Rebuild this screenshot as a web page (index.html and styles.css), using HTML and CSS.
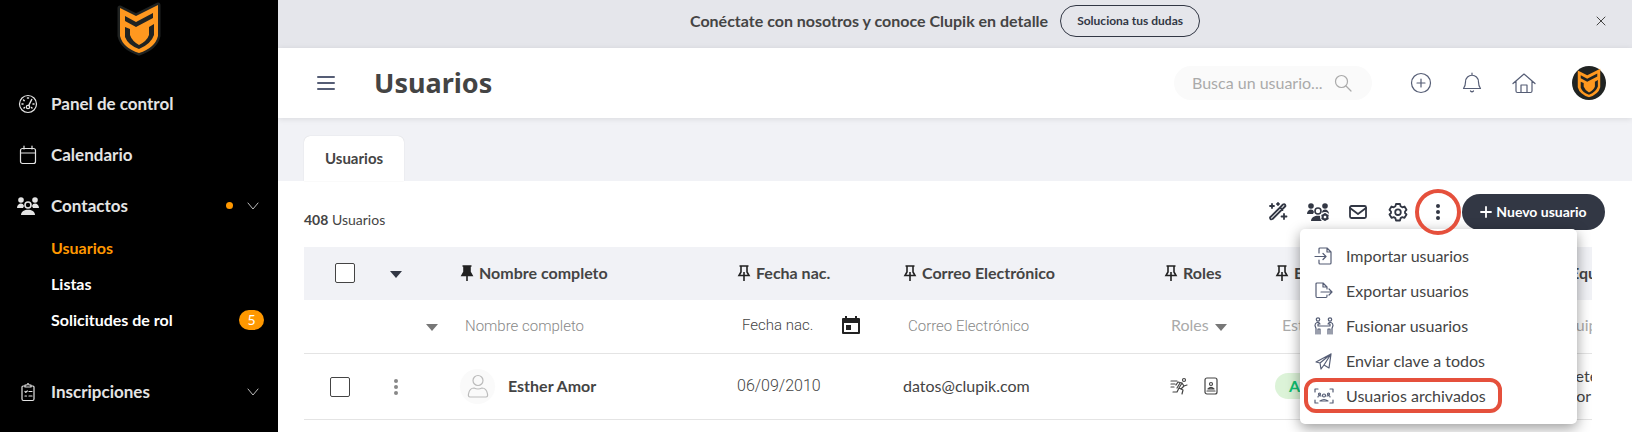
FILE: index.html
```
<!DOCTYPE html>
<html lang="es">
<head>
  <meta charset="UTF-8">
  <title>Usuarios</title>
  <meta name="viewport" content="width=device-width, initial-scale=1.0">
  <link rel="stylesheet" href="styles.css">
</head>
<body>

  <!-- shared icons -->
  <svg class="sprite" aria-hidden="true">
    <symbol id="shield" viewBox="0 0 44 54">
      <path d="M3 6 19 14 41 3V34Q38 46 22 51 6 46 3 34Z" fill="#ff981f"/>
      <path d="M8 14 19 20 36 11V16L19 25 8 19ZM8 25l5 2v6q2 6 9 10 8-4 10-10v-8l5-3v11q-3 9-15 14Q11 43 8 35Z" fill="#202322"/>
    </symbol>
    <symbol id="pin" viewBox="0 0 14 18">
      <path d="M2.500 2h9M4 2v6L2 11.500h10L10 8V2M7 8v9"/>
    </symbol>
    <symbol id="group" viewBox="0 0 24 20">
      <circle cx="5" cy="4" r="2.800"/><circle cx="19" cy="4" r="2.800"/>
      <path d="M1 12c0-5 6-6 7-2l-1 2zM23 12c0-5-6-6-7-2l1 2z"/>
      <circle cx="12" cy="9" r="3" fill="none" stroke="currentColor" stroke-width="1.600"/>
      <path d="M5 19c0-7 14-7 14 0z"/>
    </symbol>
    <symbol id="chevron" viewBox="0 0 14 10"><path d="m2 2 5 6 5-6"/></symbol>
  </svg>

  <div class="app">
    <aside class="sidebar">
      <a href="#" class="logo" aria-label="Clupik"><svg width="44" height="54" viewBox="0 0 44 54"><path d="M3 6 19 14 41 3V34Q38 46 22 51 6 46 3 34Z" fill="none" stroke="#202322" stroke-width="5" stroke-linejoin="round"/><use href="#shield"/></svg></a>

      <nav class="menu">
        <a href="#" class="menu-item">
          <svg class="line" width="20" height="20" viewBox="0 0 20 20"><circle cx="10" cy="10" r="8.500"/><circle cx="10" cy="13" r="1.700"/><path d="m10.700 11.500 3-6M4 10h1M15 10h1M5.500 6l.7.6M9.500 4h1M6 14l.5-.5M14 14l-.5-.5" stroke-width="1.500"/></svg>
          <span>Panel de control</span>
        </a>
        <a href="#" class="menu-item">
          <svg class="line" width="20" height="20" viewBox="0 0 20 20"><rect x="2.500" y="3.500" width="15" height="15" rx="2"/><path d="M2.500 8h15M6 1v3M14 1v3"/></svg>
          <span>Calendario</span>
        </a>
        <a href="#" class="menu-item">
          <svg class="solid" width="24" height="20"><use href="#group"/></svg>
          <span>Contactos</span>
          <i class="dot"></i>
          <svg class="line chevron" width="14" height="10"><use href="#chevron"/></svg>
        </a>
        <div class="submenu">
          <a href="#" class="active">Usuarios</a>
          <a href="#">Listas</a>
          <a href="#">Solicitudes de rol <span class="count">5</span></a>
        </div>
        <a href="#" class="menu-item">
          <svg class="line" width="20" height="20" viewBox="0 0 20 20"><path d="M6 4H5Q4 4 4 5v12q0 1.500 1.500 1.500h9Q16 18.500 16 17V5q0-1-1-1h-1M7 5V3h2q1-3 2 0h2v2zM7 9.500l.8.8L9.300 9M11 9.500h3M7 14h1.500M11 14h3"/></svg>
          <span>Inscripciones</span>
          <svg class="line chevron" width="14" height="10"><use href="#chevron"/></svg>
        </a>
      </nav>
    </aside>

    <main class="main">
      <div class="banner">
        <strong>Conéctate con nosotros y conoce Clupik en detalle</strong>
        <button class="banner-btn">Soluciona tus dudas</button>
        <button class="close" aria-label="Cerrar"><svg class="line" width="12" height="12"><path d="m2 2 8 8M10 2 2 10"/></svg></button>
      </div>

      <header class="header">
        <button class="burger" aria-label="Menú"><svg class="line" width="20" height="18"><path d="M2 3h16M2 9h16M2 15h16" stroke-width="2"/></svg></button>
        <h1>Usuarios</h1>
        <label class="search">
          <input type="text" placeholder="Busca un usuario..." aria-label="Busca un usuario">
          <svg class="line" width="18" height="18"><circle cx="7.500" cy="7.500" r="6"/><path d="m12 12 5 5"/></svg>
        </label>
        <div class="header-icons">
          <button aria-label="Añadir"><svg class="line" width="22" height="22"><circle cx="11" cy="11" r="9.500"/><path d="M11 7v8M7 11h8"/></svg></button>
          <button aria-label="Avisos"><svg class="line" width="22" height="22"><path d="M11 1v2M2.500 16.500Q4.500 14 4.500 10c0-9 13-9 13 0q0 4 2 6.500zM9.500 19q1.500 1.500 3 0"/></svg></button>
          <button aria-label="Inicio"><svg class="line" width="24" height="22"><path d="M1 11.500 12 2l11 9.500M4 9v10q0 1.500 1.500 1.500h13q1.500 0 1.500-1.500V9M9 20v-7h6v7"/></svg></button>
        </div>
        <a href="#" class="profile" aria-label="Perfil"><svg width="26" height="32"><use href="#shield"/></svg></a>
      </header>

      <div class="tabs"><a href="#" class="tab">Usuarios</a></div>

      <section class="content">
        <div class="toolbar">
          <p class="total"><b>408</b> Usuarios</p>
          <button class="tool" aria-label="Acciones"><svg class="line" width="20" height="20" viewBox="0 0 20 20"><path d="m2 15.500 13-13q2-1 2.500 1.500l-13 13Q2 18 2 15.500zM12 5.500 14.500 8M4 2v4M2 4h4M10 1v2M9 2h2M16 12v5M13.500 14.500h5"/></svg></button>
          <button class="tool" aria-label="Grupos"><svg class="solid" width="24" height="20"><use href="#group"/><circle cx="19" cy="15" r="5" fill="#fff"/><circle cx="19" cy="15" r="2.500" fill="none" stroke="currentColor" stroke-width="2"/><path d="M19 11v8M15.500 13l7 4M15.500 17l7-4" stroke="currentColor" stroke-width="1.300"/><circle cx="19" cy="15" r="1.300" fill="#fff"/></svg></button>
          <button class="tool" aria-label="Enviar correo"><svg class="line" width="20" height="20"><rect x="2" y="4" width="16" height="12" rx="1.500"/><path d="m2 6 8 6 8-6"/></svg></button>
          <button class="tool" aria-label="Ajustes"><svg class="line" width="20" height="20"><path d="m8 2 4 0 .6 2.300 1.700 1L16.500 4.500l2 3.300L17 9.500v1.500l1.500 1.500-2 3.300-2.200-.7-1.700 1L12 18.500H8l-.6-2.400-1.700-1-2.200.7-2-3.300L3 11V9.500L1.500 7.800l2-3.300 2.200.8 1.700-1z"/><circle cx="10" cy="10.200" r="2.800"/></svg></button>
          <div class="more">
            <button class="tool marked" aria-label="Más opciones" aria-expanded="true"><svg class="solid" width="20" height="20"><circle cx="10" cy="4" r="2"/><circle cx="10" cy="10" r="2"/><circle cx="10" cy="16" r="2"/></svg></button>
            <div class="dropdown">
              <button><svg class="line" width="20" height="20"><path d="M5 7V3q0-1 1-1h7l4 4v11q0 1-1 1H6q-1 0-1-1v-3M13 2v4h4M1 10.500h11M9 7.500l3 3-3 3"/></svg>Importar usuarios</button>
              <button><svg class="line" width="20" height="20"><path d="M13 8V6L9 2H3Q2 2 2 3v12q0 1.500 1 1.500h9q1 0 1-1.500v-1M9 2v4h4M7 11h11M15 8l3 3-3 3"/></svg>Exportar usuarios</button>
              <button><svg class="line" width="20" height="20"><circle cx="4" cy="3.500" r="1.700"/><circle cx="16" cy="3.500" r="1.700"/><path d="M7 10H4V8h2q-1-2-3-1.500-2 .5-2 3l1 3V18M6 18v-5H4v5M13 10h3V8h-2q1-2 3-1.500 2 .5 2 3l-1 3V18M14 18v-5h2v5M7 10h6"/></svg>Fusionar usuarios</button>
              <button><svg class="line" width="20" height="20"><path d="M2 11 17 3l-2 14-5-3-3 4-1-6zM17 3 6 12M17 3l-7 11"/></svg>Enviar clave a todos</button>
              <button class="highlight"><svg class="line" width="20" height="20"><path d="M1 6V3h3M16 3h3v3M1 14v3h3M16 17h3v-3M6 15q4-3 8 0zM4 11q0-2 3-1M16 11q0-2-3-1"/><circle cx="5.500" cy="8" r="1"/><circle cx="10" cy="9.500" r="1.500"/><circle cx="14.500" cy="8" r="1"/></svg>Usuarios archivados</button>
            </div>
          </div>
          <button class="new"><svg class="line" width="12" height="12"><path d="M6 1v10M1 6h10"/></svg>Nuevo usuario</button>
        </div>

        <div class="table-wrap">
          <table>
            <colgroup>
              <col class="c-check"><col class="c-menu"><col class="c-name"><col class="c-date"><col class="c-mail"><col class="c-roles"><col class="c-state"><col class="c-team">
            </colgroup>
            <thead>
              <tr>
                <th class="center wide"><input type="checkbox" aria-label="Seleccionar todos"></th>
                <th><button class="caret dark" aria-label="Opciones"></button></th>
                <th><svg class="pin fixed" width="14" height="18"><use href="#pin"/></svg>Nombre completo</th>
                <th><svg class="pin" width="14" height="18"><use href="#pin"/></svg>Fecha nac.</th>
                <th><svg class="pin" width="14" height="18"><use href="#pin"/></svg>Correo Electrónico</th>
                <th><svg class="pin" width="14" height="18"><use href="#pin"/></svg>Roles</th>
                <th><svg class="pin" width="14" height="18"><use href="#pin"/></svg>Estado</th>
                <th><svg class="pin" width="14" height="18"><use href="#pin"/></svg>Equipos</th>
              </tr>
            </thead>
            <tbody>
              <tr class="filters">
                <td></td>
                <td class="right"><button class="caret" aria-label="Filtrar"></button></td>
                <td><input type="text" placeholder="Nombre completo" aria-label="Nombre completo"></td>
                <td><div class="date-filter"><input type="text" placeholder="Fecha nac." aria-label="Fecha nac."><svg width="18" height="20"><path d="M3 1h2v2h8V1h2v2h2q1 0 1 1v14q0 1-1 1H1q-1 0-1-1V4q0-1 1-1h2zM2 8v9h14V8z" fill="#222" fill-rule="evenodd"/><path d="M4 10h5v5H4z" fill="#222"/></svg></div></td>
                <td><input type="text" placeholder="Correo Electrónico" aria-label="Correo Electrónico"></td>
                <td><button class="pick">Roles <i class="caret"></i></button></td>
                <td><button class="pick">Estado <i class="caret"></i></button></td>
                <td><button class="pick">Equipos</button></td>
              </tr>
              <tr class="row">
                <td class="center"><input type="checkbox" aria-label="Seleccionar a Esther Amor"></td>
                <td><button class="dots" aria-label="Opciones"><svg width="10" height="18"><circle cx="5" cy="3" r="2"/><circle cx="5" cy="9" r="2"/><circle cx="5" cy="15" r="2"/></svg></button></td>
                <td><div class="person"><span class="avatar"><svg class="line" width="22" height="24"><circle cx="11" cy="6.500" r="5"/><path d="M3 23q-2 0-1.500-3 1-6 5.500-6 4 2 8 0 4.500 0 5.500 6 .5 3-1.500 3z"/></svg></span><b>Esther Amor</b></div></td>
                <td class="date">06/09/2010</td>
                <td>datos@clupik.com</td>
                <td><div class="roles">
                  <svg class="line" width="18" height="18"><circle cx="14" cy="3" r="1.500"/><path d="M1 4h6M1 7h4M1 10h3M12 6 8 5 6 8M12 6l2 3 3-1M12 6l-3 5 4 2-1 4M9 11l-2 4H3M10 6l-3 5M14 9l-3 3"/></svg>
                  <svg class="line" width="14" height="18"><rect x="1" y="1" width="12" height="16" rx="2"/><circle cx="7" cy="7" r="1.500"/><path d="M4 12q3-3 6 0zM3 14h8"/></svg>
                </div></td>
                <td><span class="badge">Activo</span></td>
                <td class="teams">Cadete<br>Junior</td>
              </tr>
            </tbody>
          </table>
        </div>
      </section>
    </main>
  </div>

</body>
</html>
```

FILE: styles.css
```
* {
  box-sizing: border-box;
}

body {
  margin: 0;
  font-family: Lato, "Noto Sans", sans-serif;
  font-size: 16px;
  line-height: 20px;
  color: #444;
  background: #fff;
}

a {
  color: inherit;
  text-decoration: none;
}

button, input {
  font: inherit;
  color: inherit;
  padding: 0;
  border: none;
  background: none;
}

button {
  cursor: pointer;
}

svg {
  display: block;
  flex-shrink: 0;
}

.sprite {
  position: absolute;
  width: 0;
  height: 0;
}

.line {
  fill: none;
  stroke: currentColor;
  stroke-width: 1.2;
  stroke-linecap: round;
  stroke-linejoin: round;
}

.solid {
  fill: currentColor;
}

.app {
  display: flex;
  height: 100vh;
  overflow: hidden;
}

/* sidebar */
.sidebar {
  flex: 0 0 278px;
  background: #000;
  color: #e4e4e4;
  font-size: 17px;
  font-weight: bold;
}

.logo {
  display: flex;
  justify-content: center;
  padding-top: 2px;
}

.menu {
  padding-top: 22px;
}

.menu-item {
  display: flex;
  align-items: center;
  height: 51px;
  padding: 0 18px;
}

.menu-item svg:first-child {
  width: 24px;
  margin-left: -2px;
  margin-right: 11px;
}

.menu-item span {
  flex: 1;
}

.menu-item .chevron {
  color: #bbb;
  stroke-width: 1;
}

.dot {
  width: 7px;
  height: 7px;
  margin-right: 13px;
  border-radius: 50%;
  background: #ff9800;
}

.submenu {
  margin-top: -1px;
  padding: 0 14px 28px 51px;
  color: #fff;
  font-size: 16px;
}

.submenu a {
  display: flex;
  align-items: center;
  justify-content: space-between;
  height: 36px;
}

.submenu .active {
  color: #ff9800;
}

.count {
  width: 25px;
  border-radius: 10px;
  background: #ff9800;
  font-size: 14px;
  font-weight: normal;
  text-align: center;
}

/* top */
.main {
  flex: 1;
  min-width: 0;
}

.banner {
  position: relative;
  display: flex;
  align-items: center;
  justify-content: center;
  gap: 12px;
  height: 48px;
  padding: 0 50px 6px 30px;
  background: #e5e6eb;
}

.banner-btn {
  height: 32px;
  padding: 0 16px;
  border: 1px solid #323744;
  border-radius: 16px;
  color: #323744;
  font-size: 12px;
  font-weight: bold;
}

.close {
  position: absolute;
  right: 25px;
}

.close svg {
  stroke-width: 1;
}

.header {
  position: relative;
  display: flex;
  align-items: center;
  height: 70px;
  padding: 0 26px 0 38px;
  color: #555d75;
  box-shadow: 0 1px 6px rgba(0,0,0,0.1);
}

h1 {
  flex: 1;
  margin: 0 0 0 38px;
  color: #444;
  font: bold 27px/36px "Noto Sans", sans-serif;
}

.search {
  display: flex;
  align-items: center;
  width: 198px;
  height: 34px;
  padding: 0 20px 0 18px;
  border-radius: 17px;
  background: #fafafa;
  color: #aaa;
}

.search input {
  flex: 1;
  min-width: 0;
}

::placeholder {
  color: inherit;
  opacity: 1;
}

.header-icons {
  display: flex;
  gap: 29px;
  margin: 0 36px 0 38px;
}

.profile {
  display: flex;
  align-items: center;
  justify-content: center;
  width: 34px;
  height: 34px;
  border-radius: 50%;
  background: #202322;
}

.tabs {
  display: flex;
  align-items: flex-end;
  height: 63px;
  padding-left: 26px;
  background: #f1f2f6;
}

.tab {
  padding: 12px 21px 13px;
  border-radius: 6px 6px 0 0;
  background: #fff;
  box-shadow: 0 0 1px rgba(0,0,0,0.2);
  font-size: 15px;
  font-weight: bold;
}

/* list */
.content {
  padding: 0 27px 0 26px;
}

.toolbar {
  display: flex;
  align-items: center;
  height: 66px;
  padding-bottom: 4px;
  color: #323744;
}

.total {
  flex: 1;
  margin: 16px 0 0;
  color: #444;
  font-size: 14px;
}

.tool {
  display: flex;
  align-items: center;
  justify-content: center;
  width: 40px;
  height: 40px;
}

.tool .line {
  stroke-width: 1.8;
}

.more {
  position: relative;
  margin-right: 4px;
}

.marked::after {
  content: "";
  position: absolute;
  inset: -3px;
  border: 4px solid #e5503c;
  border-radius: 50%;
  z-index: 1;
}

.new {
  display: flex;
  align-items: center;
  justify-content: center;
  gap: 4px;
  width: 143px;
  height: 36px;
  border-radius: 18px;
  background: #323744;
  color: #fff;
  font-size: 14px;
  font-weight: bold;
}

.new svg {
  stroke-width: 1.8;
}

.dropdown {
  position: absolute;
  top: 37px;
  right: -119px;
  width: 277px;
  padding: 9px 4px 11px;
  border-radius: 5px;
  background: #fff;
  box-shadow: 0 4px 14px rgba(0,0,0,0.4);
}

.dropdown button {
  display: flex;
  align-items: center;
  gap: 12px;
  height: 35px;
  padding: 0 16px 0 10px;
  color: #444;
}

.dropdown svg {
  color: #555d75;
}

.dropdown .highlight {
  outline: 4px solid #e5503c;
  outline-offset: -4px;
  border-radius: 12px;
}

.table-wrap {
  margin-right: 13px;
  overflow: hidden;
}

table {
  table-layout: fixed;
  width: 1400px;
  border-collapse: collapse;
}

.c-check { width: 72px; }
.c-menu { width: 76px; }
.c-name { width: 277px; }
.c-date { width: 166px; }
.c-mail { width: 261px; }
.c-roles { width: 111px; }
.c-state { width: 276px; }

th, td {
  padding: 0 8px;
  text-align: left;
}

th {
  height: 53px;
  padding-bottom: 2px;
  background: #f1f2f6;
}

.center {
  text-align: center;
}

.center.wide {
  padding-left: 18px;
}

.filters {
  height: 53px;
  border-bottom: 1px solid #e4e4e4;
  color: #888;
}

.filters td {
  padding-bottom: 2px;
}

.row {
  height: 66px;
  border-bottom: 1px solid #e4e4e4;
}

input[type="checkbox"] {
  appearance: none;
  display: inline-block;
  width: 20px;
  height: 20px;
  margin: 0;
  border: 1px solid #444;
  border-radius: 2px;
  background: #fff;
  vertical-align: middle;
}

.pin {
  display: inline-block;
  margin-right: 5px;
  fill: none;
  stroke: #222;
  stroke-width: 1.6;
  vertical-align: -3px;
}

.pin.fixed {
  fill: #222;
}

.caret {
  display: inline-block;
  border: 6px solid transparent;
  border-top: 7px solid #777;
  border-bottom: none;
}

.caret.dark {
  margin-left: 6px;
  border-top-color: #323744;
}

th .caret, .filters .caret {
  vertical-align: middle;
}

.right {
  text-align: right;
  padding-right: 14px;
}

.filters input {
  width: 100%;
  padding-left: 5px;
  font: 300 15px/20px Roboto, sans-serif;
}

.date-filter {
  display: flex;
  align-items: center;
  justify-content: space-between;
  padding-right: 27px;
  color: #444;
}

.date-filter input {
  width: 96px;
}

.pick {
  padding-left: 7px;
  color: #aaa;
}

.pick .caret {
  margin-left: 2px;
}

.dots {
  margin-left: 7px;
  fill: #888;
  vertical-align: middle;
}

.person {
  display: flex;
  align-items: center;
  gap: 13px;
}

.avatar {
  display: flex;
  align-items: center;
  justify-content: center;
  width: 35px;
  height: 35px;
  border-radius: 50%;
  background: #fafafa;
  color: #bbb;
}

.date {
  font: 300 16px/20px Roboto, sans-serif;
}

.roles {
  display: flex;
  gap: 16px;
  padding-left: 6px;
}

.badge {
  display: inline-block;
  padding: 3px 14px;
  border-radius: 13px;
  background: #dcf3d8;
  color: #0fc070;
  font-weight: bold;
}

.teams {
  padding-left: 5px;
}
```
